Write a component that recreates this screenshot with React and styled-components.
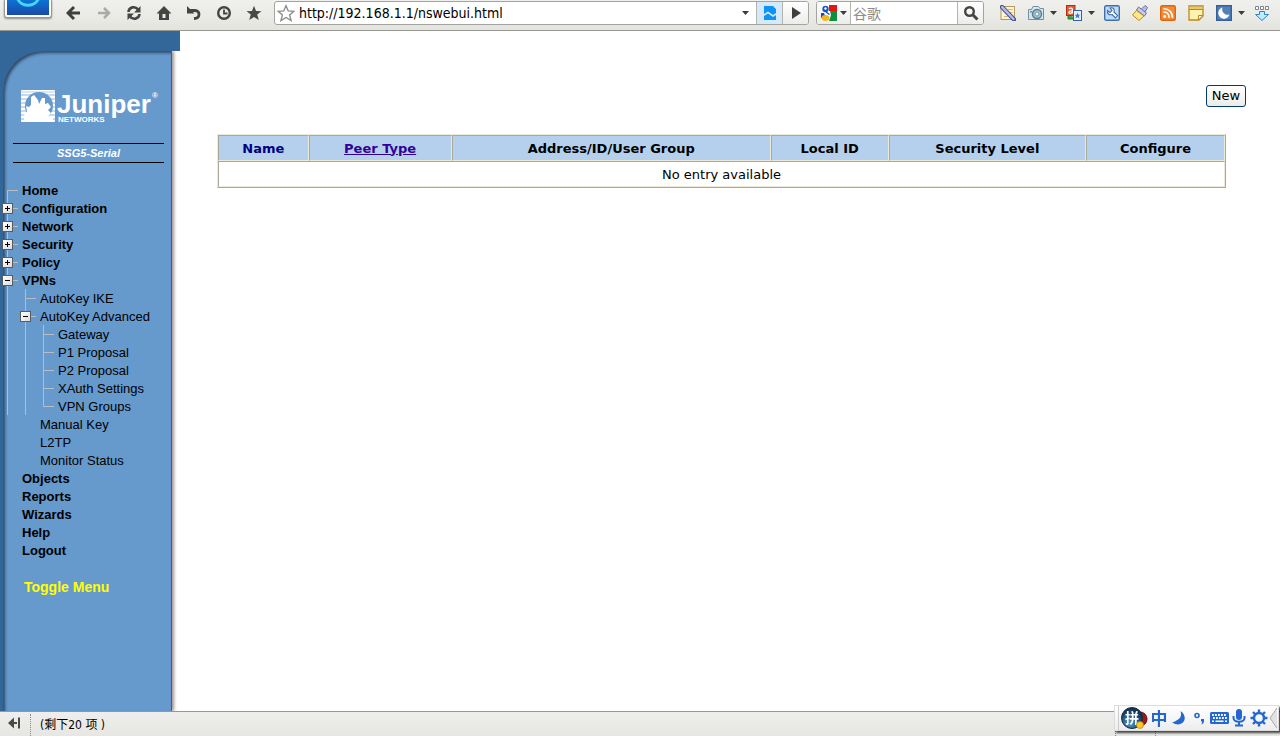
import React, { useState } from 'react'
import styled, { createGlobalStyle, css } from 'styled-components'

const GlobalStyle = createGlobalStyle`
    * {
        box-sizing: border-box;
    }
    body {
        margin: 0;
        background: #fff;
        color: #000;
        font-family: "Liberation Sans", "Noto Sans CJK SC", sans-serif;
        font-size: 13px;
    }
    button {
        font: inherit;
        color: inherit;
    }
`

// guides: one entry per 18px column left of the label
const menu = [
    { label: 'Home', guides: ['first'], bold: true },
    { label: 'Configuration', guides: ['plus'], bold: true },
    { label: 'Network', guides: ['plus'], bold: true },
    { label: 'Security', guides: ['plus'], bold: true },
    { label: 'Policy', guides: ['plus'], bold: true },
    { label: 'VPNs', guides: ['minus'], bold: true },
    { label: 'AutoKey IKE', guides: ['line', 'tee'] },
    { label: 'AutoKey Advanced', guides: ['line', 'minus'] },
    { label: 'Gateway', guides: ['line', 'line', 'tee'] },
    { label: 'P1 Proposal', guides: ['line', 'line', 'tee'] },
    { label: 'P2 Proposal', guides: ['line', 'line', 'tee'] },
    { label: 'XAuth Settings', guides: ['line', 'line', 'tee'] },
    { label: 'VPN Groups', guides: ['line', 'line', 'last'] },
    { label: 'Manual Key', guides: ['none', 'none'] },
    { label: 'L2TP', guides: ['none', 'none'] },
    { label: 'Monitor Status', guides: ['none', 'none'] },
    { label: 'Objects', guides: ['none'], bold: true },
    { label: 'Reports', guides: ['none'], bold: true },
    { label: 'Wizards', guides: ['none'], bold: true },
    { label: 'Help', guides: ['none'], bold: true },
    { label: 'Logout', guides: ['none'], bold: true },
]

const columns = [
    { label: 'Name', width: '9%', kind: 'sorted' },
    { label: 'Peer Type', width: '14.2%', kind: 'link' },
    { label: 'Address/ID/User Group', width: '31.7%' },
    { label: 'Local ID', width: '11.7%' },
    { label: 'Security Level', width: '19.6%' },
    { label: 'Configure', width: '13.8%' },
]

const navButtons = [
    { name: 'Back', icon: <path d="M8 2 L2 8 L8 14 M2.500 8 H14" fill="none" stroke="#3f3f3f" strokeWidth="3" /> },
    { name: 'Forward', icon: <path d="M8 3 L13 8 L8 13 M13 8 H2" fill="none" stroke="#aaa" strokeWidth="2.500" /> },
    {
        name: 'Reload',
        icon: (
            <g>
                <path d="M2.500 7 C3 1.500 9.500 1 12 4.500 M13.500 9 C13 14.500 6.500 15 4 11.500" fill="none" stroke="#444" strokeWidth="2.600" />
                <path d="M14.500 1 V7.500 H8 Z M1.500 15 V8.500 H8 Z" fill="#444" />
            </g>
        ),
    },
    { name: 'Home', icon: <path d="M8 1 L15.500 8.500 H13 V15 H3 V8.500 H0.500 Z M6.500 9 V13 H9.500 V9 Z" fill="#444" fillRule="evenodd" /> },
    {
        name: 'Undo',
        icon: (
            <g>
                <path d="M3 5.500 H9 C14.500 5.500 14.500 13.500 8 13.500" fill="none" stroke="#444" strokeWidth="2.800" />
                <path d="M1 1 V8.500 H8.500 Z" fill="#444" />
            </g>
        ),
    },
    {
        name: 'History',
        icon: (
            <g fill="none" stroke="#444">
                <circle cx="8" cy="8" r="5.800" strokeWidth="2.400" />
                <path d="M8 4.500 V8.500 H11.500" strokeWidth="1.800" />
            </g>
        ),
    },
    { name: 'Favorites', icon: <path d="M8 0.800 L10 6 L15.500 6.200 L11.200 9.600 L12.800 15 L8 11.900 L3.200 15 L4.800 9.600 L0.500 6.200 L6 6 Z" fill="#484848" /> },
]

const toolButtons = [
    {
        name: 'Notes',
        icon: (
            <g>
                <rect x="1" y="1.500" width="13.500" height="13" fill="#fff4cf" stroke="#b59a5c" />
                <path d="M4 11.500 H8 M8 4.500 H12.500 M10 7.500 H12.500" stroke="#d3b777" />
                <path d="M2 2 L14 14.500" stroke="#49538d" strokeWidth="4.500" strokeLinecap="round" />
                <path d="M2.200 2.200 L13.500 14" stroke="#b5bdec" strokeWidth="2.400" strokeLinecap="round" />
            </g>
        ),
    },
    {
        name: 'Capture',
        menu: true,
        icon: (
            <g>
                <path d="M0.500 4.500 H3.500 L5 1.500 H10.500 L12 3.500 H15.500 V14.500 H0.500 Z" fill="#d5e4ed" stroke="#7091a5" />
                <circle cx="9" cy="9" r="4.500" fill="#a7c5d5" stroke="#5d7f94" strokeWidth="1.500" />
                <circle cx="9" cy="9" r="2" fill="#eef6fb" stroke="#7796a8" />
                <rect x="2" y="6" width="2" height="1.500" fill="#7091a5" />
            </g>
        ),
    },
    {
        name: 'Translate',
        menu: true,
        icon: (
            <g>
                <path d="M2 10 V14 H8 V12" fill="#38a34a" stroke="#247d34" />
                <rect x="0.500" y="0.500" width="8.500" height="10" fill="#e75a31" stroke="#b42d10" />
                <path d="M3 4 C4 2.500 6.500 3 6.500 5 V8.500 M6.500 5.800 C2 5.500 2 9 5 8.300 L6.500 7" fill="none" stroke="#fff" strokeWidth="1.300" />
                <rect x="7.500" y="5.500" width="8" height="10" fill="#e9f1ff" stroke="#315fae" />
                <path d="M11.500 7.500 L12.300 9.700 H14.500 L12.800 11 L13.500 13.500 L11.500 12 L9.500 13.500 L10.200 11 L8.500 9.700 H10.700 Z" fill="#3b77d1" />
            </g>
        ),
    },
    {
        name: 'Options',
        icon: (
            <g>
                <rect x="0.700" y="0.700" width="14.600" height="14.600" rx="1.500" fill="#bddcfb" stroke="#426fac" strokeWidth="1.400" />
                <path d="M6 3 C9 2 11 4 10 7 L13.500 10.500 L11.500 13 L8 9.500 C5 10.500 3 8.500 3.500 5.500 L6 7.500 L8 5.500 Z" fill="#fff" stroke="#416ba5" strokeWidth="1.100" />
            </g>
        ),
    },
    {
        name: 'Clean',
        icon: (
            <g>
                <path d="M9.500 4 L13 0.500 L15.500 2.500 L13 7" fill="#b7bdeb" stroke="#6b71aa" />
                <path d="M6.500 2 L14.500 8 L12.500 11 L4.500 5 Z" fill="#c5caef" stroke="#6b71aa" />
                <path d="M4.500 5.500 L12 11 L7 15.500 L0.500 10 Z" fill="#ffe78c" stroke="#b28a27" />
            </g>
        ),
    },
    {
        name: 'Feeds',
        icon: (
            <g>
                <rect x="0.700" y="0.700" width="14.600" height="14.600" rx="1.500" fill="#f58b35" stroke="#dd6710" strokeWidth="1.400" />
                <circle cx="4.700" cy="11.500" r="1.400" fill="#fff" />
                <path d="M3.500 7 A5 5 0 0 1 9 12.800 M3.500 3.800 A8.500 8.500 0 0 1 12.500 12.800" fill="none" stroke="#fff" strokeWidth="1.600" />
            </g>
        ),
    },
    {
        name: 'Memo',
        icon: (
            <g>
                <path d="M1 1 H15 V11 L11 15 H1 Z" fill="#fff2ac" stroke="#b68a22" strokeWidth="1.300" />
                <path d="M1.500 3 H14.500" stroke="#ecc56c" strokeWidth="2.500" />
                <path d="M1 4.500 H15" stroke="#b68a22" />
                <path d="M15 10.500 H10.500 V15 Z" fill="#fff" stroke="#b68a22" />
            </g>
        ),
    },
    {
        name: 'Night mode',
        menu: true,
        icon: (
            <g>
                <rect x="0.700" y="0.700" width="14.600" height="14.600" fill="#5181ba" stroke="#365f97" strokeWidth="1.400" />
                <path d="M6.500 2.500 A5.700 5.700 0 1 0 13.500 9.500 A5.500 5.500 0 0 1 6.500 2.500" fill="#fff" />
            </g>
        ),
    },
    {
        name: 'Downloads',
        icon: (
            <g>
                <path d="M1.500 1.500 H4.500 V4.500 H1.500 Z M6.500 1.500 H9.500 V4.500 H6.500 Z M11.500 1.500 H14.500 V4.500 H11.500 Z" fill="#fff" stroke="#7c8292" />
                <path d="M5.500 6.500 H10.500 V9.500 H14.500 L8 15.500 L1.500 9.500 H5.500 Z" fill="#bcecff" stroke="#3185b8" />
            </g>
        ),
    },
]

const Icon = ({ size = 16, children }) => (
    <svg width={size} height={size} viewBox="0 0 16 16" aria-hidden="true">{children}</svg>
)

const Caret = () => (
    <svg width="7" height="4" viewBox="0 0 7 4" aria-hidden="true"><path d="M0 0 H7 L3.500 4 Z" fill="#3c3c3c" /></svg>
)

const JuniperLogo = () => (
    <svg width="140" height="38" viewBox="0 0 140 38" role="img" aria-label="Juniper Networks">
        <rect x="1" y="1" width="34" height="32" rx="1" fill="#fff" />
        <path d="M1 3 H35" stroke="#dbe7f4" strokeWidth="2" />
        <path d="M1 6 H35 M1 10 H35 M1 14 H35 M1 18 H35 M1 22 H35 M1 26 H35 M1 30 H35" stroke="#8fb4da" />
        <circle cx="19" cy="17" r="14" fill="#6699cc" />
        <path d="M10 33 L7 28 L3 27 L7 23 L6 17 L9 18 L11 16 L11 8 L14 6 L18 11 L19 15 L22 9 L25 9 L25 15 L28 14 L31 18 L28 21 L31 24 L28 28 L28 33 Z" fill="#fff" />
        <path d="M4 28 H33 V33 H4 Z" fill="#fff" />
        <LogoName x="37" y="24">Juniper</LogoName>
        <LogoSub x="38" y="33">NETWORKS</LogoSub>
        <LogoMark x="132" y="9">®</LogoMark>
    </svg>
)

const App = () => {
    const [url, setUrl] = useState('http://192.168.1.1/nswebui.html')
    const [query, setQuery] = useState('')
    const [menuOpen, setMenuOpen] = useState(true)

    return (
        <Browser>
            <GlobalStyle />
            <Toolbar>
                <BrowserLogo aria-label="Browser menu">
                    <svg width="42" height="16" viewBox="0 0 42 16" aria-hidden="true">
                        <path d="M10 -3 C13 8 29 8 32 -3" fill="none" stroke="#43d8ff" strokeWidth="3" />
                    </svg>
                </BrowserLogo>
                <NavGroup>
                    {navButtons.map((b) => (
                        <IconButton key={b.name} $width={30} aria-label={b.name}><Icon>{b.icon}</Icon></IconButton>
                    ))}
                </NavGroup>
                <AddressBox>
                    <IconButton $width={22} aria-label="Bookmark">
                        <Icon size={18}>
                            <path d="M8 1.500 L10 6.200 L15 6.500 L11.200 9.800 L12.500 14.700 L8 12 L3.500 14.700 L4.800 9.800 L1 6.500 L6 6.200 Z" fill="#fff" stroke="#8c8c8c" strokeWidth="1.200" />
                        </Icon>
                    </IconButton>
                    <UrlInput aria-label="Address" value={url} onChange={(e) => setUrl(e.target.value)} />
                    <IconButton $width={22} aria-label="Show addresses"><Caret /></IconButton>
                    <BoxButton $blue aria-label="Compatibility mode">
                        <Icon>
                            <path d="M2 1 H11 L14 4 V8 L11 10 L6 6.500 L2 9 Z" fill="#0c93f5" />
                            <path d="M2 11 L6 8.500 L11 12 L14 10 V15 H2 Z" fill="#0c93f5" />
                        </Icon>
                    </BoxButton>
                    <BoxButton aria-label="Go"><Icon><path d="M4 2 L13 8 L4 14 Z" fill="#3f3f3f" /></Icon></BoxButton>
                </AddressBox>
                <SearchBox>
                    <EngineButton aria-label="Search engine">
                        <Icon>
                            <rect width="16" height="16" fill="#fff" />
                            <path d="M8 0 H16 V6 H8 Z" fill="#e2180c" />
                            <path d="M9 6 H16 V16 H8 L10 10 Z" fill="#0d9140" />
                            <path d="M0 8 H3 L5 13 H0 Z" fill="#1a4db0" />
                            <circle cx="4.500" cy="4" r="3.200" fill="#1a56bd" />
                            <circle cx="4.500" cy="3.500" r="1.200" fill="#fff" />
                            <path d="M5 7 L8.500 9.500" stroke="#1a56bd" strokeWidth="1.500" />
                            <ellipse cx="4.500" cy="13" rx="4" ry="3" fill="#f5b722" />
                        </Icon>
                        <Caret />
                    </EngineButton>
                    <SearchInput aria-label="Search" placeholder="谷歌" value={query} onChange={(e) => setQuery(e.target.value)} />
                    <BoxButton aria-label="Search">
                        <Icon>
                            <circle cx="6.500" cy="6.500" r="4.300" fill="none" stroke="#444" strokeWidth="2.400" />
                            <path d="M9.500 9.500 L14.500 14.500" stroke="#444" strokeWidth="3" />
                        </Icon>
                    </BoxButton>
                </SearchBox>
                <ToolGroup>
                    {toolButtons.map((b) => (
                        <React.Fragment key={b.name}>
                            <IconButton $width={28} aria-label={b.name}><Icon>{b.icon}</Icon></IconButton>
                            {b.menu && <MenuArrow aria-label={b.name + ' menu'}><Caret /></MenuArrow>}
                        </React.Fragment>
                    ))}
                </ToolGroup>
            </Toolbar>

            <Main>
                <Sidebar>
                    <Band />
                    <PanelHolder>
                        <Panel>
                            <LogoLink href="#home"><JuniperLogo /></LogoLink>
                            <Device>SSG5-Serial</Device>
                            <Tree>
                                {menuOpen && menu.map((item) => (
                                    <TreeRow key={item.label}>
                                        {item.guides.map((g, i) => (
                                            <Guide key={i} $kind={g}>
                                                {(g === 'plus' || g === 'minus') && (
                                                    <Expander aria-label={(g === 'plus' ? 'Expand ' : 'Collapse ') + item.label}>
                                                        <svg width="9" height="9" viewBox="0 0 9 9" aria-hidden="true">
                                                            <path d={g === 'plus' ? 'M2 4.500 H7 M4.500 2 V7' : 'M2 4.500 H7'} stroke="#000" />
                                                        </svg>
                                                    </Expander>
                                                )}
                                            </Guide>
                                        ))}
                                        <TreeLink href="#menu" $bold={item.bold}>{item.label}</TreeLink>
                                    </TreeRow>
                                ))}
                            </Tree>
                            <ToggleMenu onClick={() => setMenuOpen(!menuOpen)}>Toggle Menu</ToggleMenu>
                        </Panel>
                    </PanelHolder>
                </Sidebar>

                <Content>
                    <Actions>
                        <NewButton>New</NewButton>
                    </Actions>
                    <TableArea>
                        <Table>
                            <colgroup>
                                {columns.map((c) => <col key={c.label} width={c.width} />)}
                            </colgroup>
                            <thead>
                                <tr>
                                    {columns.map((c) => (
                                        <HeadCell key={c.label} $sorted={c.kind === 'sorted'}>
                                            {c.kind === 'link' ? <SortLink href="#sort">{c.label}</SortLink> : c.label}
                                        </HeadCell>
                                    ))}
                                </tr>
                            </thead>
                            <tbody>
                                <tr>
                                    <Cell colSpan={columns.length}>No entry available</Cell>
                                </tr>
                            </tbody>
                        </Table>
                    </TableArea>
                </Content>
            </Main>

            <StatusBar>
                <IconButton $width={30} aria-label="Hide sidebar">
                    <Icon>
                        <path d="M1 8 L7 2.500 V13.500 Z M6 7 H10 V9 H6 Z M11 2.500 H13 V13.500 H11 Z" fill="#4a4a4a" />
                    </Icon>
                </IconButton>
                <StatusText>(剩下20 项 )</StatusText>
                <StatusSlot $width={40} />
                <StatusSlot $width={125} />
            </StatusBar>

            <ImeBar>
                <ImeLogo>
                    <svg width="28" height="26" viewBox="0 0 28 26" aria-hidden="true">
                        <defs>
                            <radialGradient id="ball" cx="40%" cy="75%" r="80%">
                                <stop offset="0" stopColor="#4d9ac4" />
                                <stop offset="0.600" stopColor="#1c4a74" />
                                <stop offset="1" stopColor="#10283f" />
                            </radialGradient>
                        </defs>
                        <circle cx="19" cy="13" r="7" fill="#a51616" stroke="#5c0d0d" />
                        <circle cx="11" cy="12" r="10.500" fill="url(#ball)" stroke="#122b42" />
                        <ImeBallText x="11" y="17" textAnchor="middle">拼</ImeBallText>
                        <circle cx="19" cy="19" r="3.500" fill="#ffc928" stroke="#b98410" strokeWidth="0.700" />
                    </svg>
                </ImeLogo>
                <ImeButton aria-label="Chinese input">中</ImeButton>
                <ImeButton aria-label="Half width">
                    <Icon><path d="M9.500 1 C18.500 7 12 19 1 12.500 C3.500 11.800 4.500 11.200 5.500 10.500 C9.500 8.500 11 5.500 9.500 1" fill="#2468cf" /></Icon>
                </ImeButton>
                <ImeButton aria-label="Punctuation">
                    <Icon>
                        <circle cx="6" cy="5.500" r="2" fill="none" stroke="#2468cf" strokeWidth="1.600" />
                        <path d="M10 9 H13 V11 C13 13 12 14 10 14.500 C11 13.500 11.200 12.500 11 11.500 H10 Z" fill="#2468cf" />
                    </Icon>
                </ImeButton>
                <ImeButton aria-label="Soft keyboard">
                    <svg width="19" height="12" viewBox="0 0 19 12" aria-hidden="true">
                        <rect width="19" height="12" rx="1.500" fill="#2468cf" />
                        <path d="M2 3 H17 M3 6 H17" stroke="#fff" strokeWidth="1.800" strokeDasharray="1.800 1.200" />
                        <path d="M2 9.200 H4 M5.500 9.200 H13.500 M15 9.200 H17" stroke="#fff" strokeWidth="1.600" />
                    </svg>
                </ImeButton>
                <ImeButton aria-label="Voice input">
                    <svg width="14" height="18" viewBox="0 0 14 18" aria-hidden="true">
                        <rect x="4" y="0" width="6" height="11" rx="3" fill="#2468cf" />
                        <path d="M1.500 7 V9 C1.500 14 12.500 14 12.500 9 V7 M7 13 V16 M3 16.500 H11" fill="none" stroke="#2468cf" strokeWidth="2" />
                    </svg>
                </ImeButton>
                <ImeButton aria-label="Settings">
                    <svg width="18" height="18" viewBox="0 0 18 18" aria-hidden="true">
                        <circle cx="9" cy="9" r="5" fill="none" stroke="#2468cf" strokeWidth="2.400" />
                        <path d="M9 0.500 V4 M9 14 V17.500 M0.500 9 H4 M14 9 H17.500 M3 3 L5.500 5.500 M12.500 12.500 L15 15 M15 3 L12.500 5.500 M5.500 12.500 L3 15" stroke="#2468cf" strokeWidth="2.400" />
                    </svg>
                </ImeButton>
                <ImeFold aria-label="Fold">
                    <svg width="8" height="20" viewBox="0 0 8 20" aria-hidden="true"><path d="M8 0 L1 10 L8 20" fill="#e2e2e2" stroke="#a8a8a8" /></svg>
                </ImeFold>
            </ImeBar>
        </Browser>
    )
}

export default App

const Browser = styled.div`
    display: flex;
    flex-direction: column;
    min-height: 100vh;
    padding-bottom: 1px;
`

const Toolbar = styled.header`
    display: flex;
    align-items: flex-start;
    height: 31px;
    padding: 0 4px;
    background: linear-gradient(to bottom, #f0f0ee, #e4e4df);
    border-bottom: 1px solid #979793;
`

const BrowserLogo = styled.button`
    width: 48px;
    height: 18px;
    margin-right: 7px;
    padding: 0 2px 2px;
    border: 1px solid #999;
    border-top: 0;
    border-radius: 0 0 3px 3px;
    background: linear-gradient(to bottom, #0d72d4, #1b4aa6) content-box, #fff;
    box-shadow: 0 1px 2px rgba(0, 0, 0, 0.4);
    overflow: hidden;
    svg {
        display: block;
    }
`

const NavGroup = styled.nav`
    display: flex;
    margin-right: 5px;
`

const ToolGroup = styled.div`
    display: flex;
    margin-left: 10px;
`

const IconButton = styled.button`
    display: flex;
    align-items: center;
    justify-content: center;
    flex: none;
    width: ${(p) => p.$width}px;
    height: 26px;
    padding: 0;
    border: 0;
    background: none;
`

const MenuArrow = styled.button`
    display: flex;
    align-items: center;
    width: 10px;
    height: 26px;
    padding: 0;
    border: 0;
    background: none;
`

const boxed = css`
    display: flex;
    align-items: center;
    height: 24px;
    margin-top: 1px;
    border: 1px solid #a3a39f;
    border-radius: 3px;
    background: #fff;
    overflow: hidden;
`

const AddressBox = styled.div`
    ${boxed}
    flex: 1;
    min-width: 200px;
`

const SearchBox = styled.div`
    ${boxed}
    width: 168px;
    margin-left: 7px;
`

const UrlInput = styled.input`
    flex: 1;
    min-width: 0;
    padding: 0 0 0 2px;
    border: 0;
    outline: 0;
    font-family: "DejaVu Sans Condensed", "Noto Sans", sans-serif;
    font-size: 14px;
`

const SearchInput = styled.input`
    flex: 1;
    min-width: 0;
    padding: 0 2px;
    border: 0;
    outline: 0;
    font-family: "Noto Sans CJK SC", sans-serif;
    font-size: 14px;
    &::placeholder {
        color: #8c8c8c;
    }
`

const BoxButton = styled.button`
    display: flex;
    align-items: center;
    justify-content: center;
    flex: none;
    width: 26px;
    height: 22px;
    padding: 0;
    border: 0;
    border-left: 1px solid #b4b4b0;
    background: ${(p) => (p.$blue ? '#d6e9fb' : 'linear-gradient(to bottom, #fff, #ececea)')};
`

const EngineButton = styled.button`
    display: flex;
    align-items: center;
    justify-content: space-between;
    flex: none;
    width: 34px;
    height: 22px;
    padding: 0 3px 0 4px;
    border: 0;
    border-right: 1px solid #b4b4b0;
    background: linear-gradient(to bottom, #fff, #ececea);
`

const Main = styled.div`
    display: flex;
    flex: 1;
`

const Sidebar = styled.aside`
    display: flex;
    flex-direction: column;
    width: 180px;
    background: #fff;
`

const Band = styled.div`
    height: 20px;
    background: #336699;
`

const PanelHolder = styled.div`
    flex: 1;
    display: flex;
    width: 172px;
    padding-left: 3px;
    background: #336699;
    box-shadow: 2px 0 3px rgba(60, 40, 40, 0.5);
    clip-path: inset(0 -7px 0 0);
`

const Panel = styled.div`
    flex: 1;
    min-width: 0;
    padding-top: 38px;
    border-top-left-radius: 40px;
    border-right: 1px solid #4f5d6b;
    background: #6699cc;
    box-shadow: inset 2px 2px 3px rgba(25, 40, 60, 0.7);
`

const LogoLink = styled.a`
    display: block;
    height: 38px;
    margin-left: 17px;
    svg {
        display: block;
    }
`

const LogoName = styled.text`
    fill: #fff;
    font: bold 26px "Liberation Sans", sans-serif;
`

const LogoSub = styled.text`
    fill: #fff;
    font: bold 8px "Liberation Sans", sans-serif;
`

const LogoMark = styled.text`
    fill: #fff;
    font: bold 8px "Liberation Sans", sans-serif;
`

const Device = styled.div`
    height: 20px;
    margin: 16px 7px 18px 10px;
    border-top: 1px solid #000;
    border-bottom: 1px solid #000;
    color: #fff;
    font-size: 11px;
    font-weight: bold;
    font-style: italic;
    line-height: 18px;
    text-align: center;
`

const Tree = styled.div`
    margin-left: -3px;
`

const TreeRow = styled.div`
    display: flex;
    height: 18px;
`

const upright = (from, size) => `linear-gradient(#b9bcc2, #b9bcc2) 7px ${from} / 1px ${size} no-repeat`
const stub = 'linear-gradient(#b9bcc2, #b9bcc2) 7px 9px / 11px 1px no-repeat'

const guideLines = {
    none: 'none',
    line: upright('0', '18px'),
    first: `${upright('9px', '9px')}, ${stub}`,
    last: `${upright('0', '9px')}, ${stub}`,
    tee: `${upright('0', '18px')}, ${stub}`,
    plus: `${upright('0', '18px')}, ${stub}`,
    minus: `${upright('0', '18px')}, ${stub}`,
}

const Guide = styled.span`
    flex: none;
    width: 18px;
    height: 18px;
    padding: 4px 0 0 2px;
    background: ${(p) => guideLines[p.$kind]};
`

const Expander = styled.button`
    display: block;
    width: 11px;
    height: 11px;
    padding: 0;
    border: 1px solid #5c5c5c;
    background: linear-gradient(135deg, #fff, #dcdcdc);
    svg {
        display: block;
    }
`

const TreeLink = styled.a`
    padding: 1px 0 0 4px;
    color: #000;
    font-weight: ${(p) => (p.$bold ? 'bold' : 'normal')};
    line-height: 18px;
    text-decoration: none;
    white-space: nowrap;
`

const ToggleMenu = styled.button`
    display: block;
    height: 18px;
    margin: 19px 0 0 21px;
    padding: 0;
    border: 0;
    background: none;
    color: #ffff00;
    font-size: 14px;
    font-weight: bold;
    line-height: 18px;
`

const Content = styled.main`
    flex: 1;
    min-width: 0;
    padding-top: 54px;
    font-family: "DejaVu Sans", sans-serif;
`

const Actions = styled.div`
    display: flex;
    justify-content: flex-end;
    padding-right: 34px;
`

const NewButton = styled.button`
    width: 40px;
    height: 22px;
    padding: 0 0 2px;
    border: 1px solid #003c74;
    border-radius: 3px;
    background: linear-gradient(to bottom, #fff, #ecebe6);
`

const TableArea = styled.div`
    padding: 27px 54px 0 37px;
`

const Table = styled.table`
    width: 100%;
    table-layout: fixed;
    border: 1px solid;
    border-color: #ece9d8 #aca899 #aca899 #ece9d8;
    border-spacing: 0;
`

const cell = css`
    height: 26px;
    padding: 0;
    border: 1px solid;
    border-color: #aca899 #ece9d8 #ece9d8 #aca899;
    text-align: center;
`

const HeadCell = styled.th`
    ${cell}
    background: #b5d0ed;
    color: ${(p) => (p.$sorted ? '#000080' : '#000')};
`

const Cell = styled.td`
    ${cell}
`

const SortLink = styled.a`
    color: #330099;
`

const StatusBar = styled.footer`
    display: flex;
    align-items: flex-end;
    height: 25px;
    border-top: 1px solid #979793;
    background: linear-gradient(to bottom, #eeeeec, #e6e6e2);
`

const StatusText = styled.span`
    height: 22px;
    padding-left: 9px;
    border-left: 1px dotted #888;
    font-family: "DejaVu Sans Condensed", "Noto Sans CJK SC", sans-serif;
    font-size: 12px;
    line-height: 22px;
    margin-right: auto;
`

const StatusSlot = styled.span`
    width: ${(p) => p.$width}px;
    height: 22px;
    border-left: 1px dotted #888;
`

const ImeBar = styled.div`
    position: fixed;
    right: 1px;
    bottom: 6px;
    display: flex;
    align-items: center;
    height: 26px;
    border: 1px solid #ddd;
    background: linear-gradient(to bottom, #fff, #ededed);
    box-shadow: 2px 2px 2px rgba(0, 0, 0, 0.7);
`

const ImeLogo = styled.span`
    height: 24px;
    margin-left: 3px;
    padding-left: 2px;
    border-left: 1px solid #ccc;
    svg {
        display: block;
    }
`

const ImeBallText = styled.text`
    fill: #fff;
    font: bold 14px "Noto Sans CJK SC", sans-serif;
`

const ImeButton = styled.button`
    display: flex;
    align-items: center;
    justify-content: center;
    width: 20px;
    height: 24px;
    padding: 0;
    border: 0;
    background: none;
    color: #2468cf;
    font-family: "Noto Sans CJK SC", sans-serif;
    font-size: 17px;
    font-weight: bold;
    line-height: 24px;
`

const ImeFold = styled.button`
    display: flex;
    width: 9px;
    padding: 0;
    border: 0;
    background: none;
`
